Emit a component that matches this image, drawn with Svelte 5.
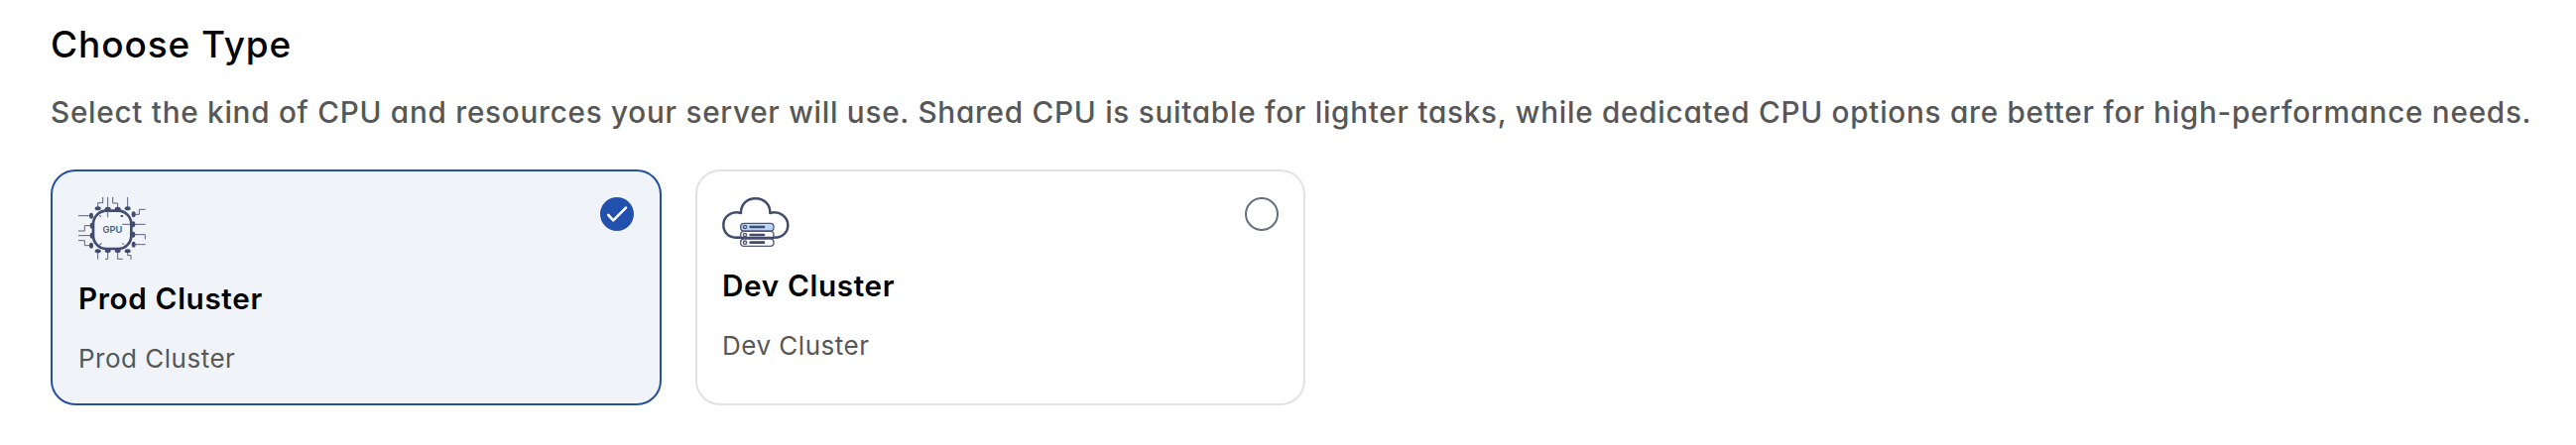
<script>
  let selected = $state('prod');
  const options = [
    { id: 'prod', name: 'Prod Cluster' },
    { id: 'dev', name: 'Dev Cluster' }
  ];
  const nodes = [
    [86, 61], [116, 62], [146, 62], [176, 61],
    [86, 190], [116, 189], [146, 189], [176, 190],
    [66, 83], [68, 113], [68, 143], [66, 173],
    [194, 79], [193, 109], [193, 140], [194, 170]
  ];
</script>

<main>
  <h1><span>Choose Type</span></h1>
  <p class="intro"><span>Select the kind of CPU and resources your server will use. Shared CPU is suitable for lighter tasks, while dedicated CPU options are better for high-performance needs.</span></p>
  <div class="options">
    {#each options as option (option.id)}
      <button class="card {option.id}" class:selected={selected === option.id} onclick={() => (selected = option.id)}>
        <span class="top">
          {#if option.id === 'prod'}
            <svg class="gpu" viewBox="27 27 204 189">
              <g fill="none" stroke="#59617e" stroke-width="3">
                <path d="M86 60V44H101V27M116 27V88M131 27V45H146V62M176 27V61M86 190V215M116 189V214H108M146 189V214H161M176 190V203H186V216" />
                <path d="M27 83H66M68 113H46V129H27M27 143H68M27 158H46V173H66M194 79H211V64H230M160 109H230M193 140H229V154M194 170H230" />
              </g>
              <rect x="72" y="68" width="115" height="115" rx="40" fill="#f2f5f9" stroke="#424b70" stroke-width="8" />
              <path d="M116 64V88M160 109H190" stroke="#59617e" stroke-width="3" />
              <g fill="#424b70">
                {#each nodes as [x, y], i}
                  <ellipse cx={x} cy={y} rx={i < 8 ? 9 : 6} ry={i < 8 ? 6 : 9} />
                {/each}
                <path d="M90 81l5 2 2 5-6-3zM155 81h7v6h-7zM91 170l6-6v5l-5 4zM161 164l6 7-7-2z" />
              </g>
              <text x="130" y="136" text-anchor="middle">GPU</text>
            </svg>
          {:else}
            <svg class="cloud" viewBox="39 42 204 150" preserveAspectRatio="xMinYMin meet">
              <path d="M80 164C57 163 43 147 43 126C43 100 68 82 96 90C95 64 114 46 140 46S185 64 184 90C213 82 238 101 238 127C238 148 222 164 197 164Z" fill="#fff" stroke="#424b70" stroke-width="7.5" stroke-linejoin="round" />
              <g stroke="#50597a" stroke-width="4">
                <rect x="95" y="168" width="100" height="22" rx="10" fill="#fff" />
                <rect x="95" y="145" width="100" height="22" rx="10" fill="#fff" />
                <rect x="95" y="121" width="100" height="23" rx="10" fill="#bcd5f7" />
                <circle cx="108" cy="132" r="5" fill="#a9c8f0" />
                <circle cx="108" cy="156" r="5" fill="#f5dfc5" />
                <circle cx="108" cy="179" r="5" fill="#f5dfc5" />
              </g>
              <path d="M125 132H165M125 156H165M125 179H165" stroke="#424b70" stroke-width="8" stroke-linecap="round" />
              <path d="M80 164H197" stroke="#424b70" stroke-width="6" />
            </svg>
          {/if}
          <span class="radio">
            {#if selected === option.id}
              <svg viewBox="0 0 34 34"><path d="M8.3 18L13.3 23.3L26 10.7" fill="none" stroke="#fff" stroke-width="2.6" stroke-linecap="round" stroke-linejoin="round" /></svg>
            {/if}
          </span>
        </span>
        <strong>{option.name}</strong>
        <small>{option.name}</small>
      </button>
    {/each}
  </div>
</main>

<style>
  :global(body) { background: #fff; }
  main { box-sizing: border-box; height: 449px; padding: 18px 0 0 51px; font-family: Inter, sans-serif; font-feature-settings: "cv11" 1; overflow: hidden; }
  h1, p { margin: 0; white-space: nowrap; }
  h1 { font-size: 37px; line-height: 54px; font-weight: 500; letter-spacing: 0.9px; color: #000; }
  .intro { margin-top: 19px; font-size: 29.7px; line-height: 45px; font-weight: 500; letter-spacing: 0.73px; color: #575757; }
  .options { display: flex; gap: 34px; margin-top: 35px; }
  .card { box-sizing: border-box; width: 616px; height: 238px; padding: 26px; display: flex; flex-direction: column; align-items: stretch; border: 2px solid #e2e2e2; border-radius: 25px; background: #fff; font-family: inherit; text-align: left; }
  .card.dev { width: 615px; padding: 26px 25px; }
  .card.selected { border-color: #2450a0; background: #f0f4f9; }
  .top { display: flex; justify-content: space-between; align-items: flex-start; }
  svg { display: block; }
  .gpu { width: 68px; height: 63px; }
  .cloud { width: 68px; height: 50px; }
  text { font: 600 28px Inter, sans-serif; fill: #50597a; }
  .radio { box-sizing: border-box; width: 34px; height: 34px; border: 2px solid #67717e; border-radius: 50%; }
  .selected .radio { border: 0; background: #2250ad; }
  strong { margin-top: 17px; font-size: 29.7px; line-height: 45px; font-weight: 600; letter-spacing: 0.65px; color: #000; }
  small { margin-top: 18px; font-size: 26px; line-height: 39px; font-weight: 400; letter-spacing: 0.5px; color: #575757; }
</style>
